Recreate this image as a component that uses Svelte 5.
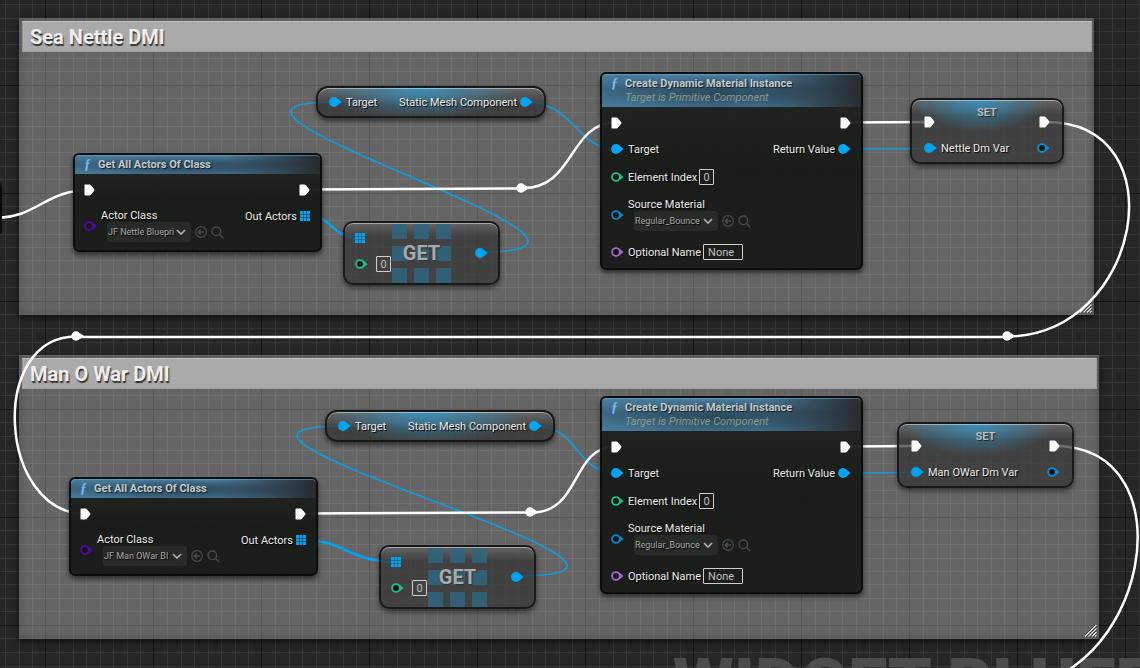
<script>
  const minorX = [14, 28, 41, 55, 68, 82, 95];
  const minorY = [13, 27, 41, 54, 67, 81, 94];

  const comments = [
    { title: 'Sea Nettle DMI', x: 19, y: 18, w: 1075, h: 297 },
    { title: 'Man O War DMI', x: 19, y: 355, w: 1080, h: 284 }
  ];

  const actorNodes = [
    { id: 'nettle', x: 73, y: 153, value: 'JF Nettle Bluepri' },
    { id: 'manowar', x: 69, y: 477, value: 'JF Man OWar Bl' }
  ];
  const componentNodes = [{ x: 316, y: 86 }, { x: 325, y: 410 }];
  const getNodes = [{ x: 343, y: 221 }, { x: 379, y: 545 }];
  const materialNodes = [{ id: 'a', x: 600, y: 72 }, { id: 'b', x: 600, y: 396 }];
  const setNodes = [
    { x: 910, y: 98, w: 154, name: 'Nettle Dm Var' },
    { x: 897, y: 422, w: 177, name: 'Man OWar Dm Var' }
  ];

  const execWires = [
    'M-6 218 C38 218 44 190 90 190',
    'M305 189.500 L521 188.500',
    'M521 188 C575 190 568 122.500 616 122.500',
    'M846 122.500 L928 122',
    'M1046 122 C1180 122 1141 336.500 1007 336.500',
    'M76 337 H1007',
    'M76 336.500 C-12 336.500 -2 514 86 514',
    'M301 513.500 L530 512.500',
    'M530 512.500 C582 514 570 446.500 616 446.500',
    'M846 446.500 L914 446',
    'M1054 446 C1193 446 1146 688 1007 688'
  ];
  const objectWires = [
    'M334 102 C138 102 687 252 481 252',
    'M525 102 C575 102 575 149 616 149',
    'M843 149 L928 148.500',
    'M344 426 C128 426 741 576 517 576',
    'M534 426 C580 426 575 473 616 473',
    'M843 473 L915 472.500'
  ];
  const arrayWires = [
    'M306 216 C335 216 330 238 360 238',
    'M302 540 C345 540 350 562 396 562'
  ];
  const reroutes = [[521, 188], [1007, 336], [76, 336], [530, 512]];
</script>

{#snippet exec()}
  <svg class="exec" width="11" height="12" viewBox="0 0 11 12" aria-hidden="true">
    <path d="M1.200 .5h4.300c.5 0 .9.200 1.200.5l3.500 4.200c.4.500.4 1.100 0 1.600L6.700 11c-.3.300-.7.500-1.200.5H1.200c-.5 0-.7-.3-.7-.7V1.200c0-.4.200-.7.700-.7z" fill="#fff" />
  </svg>
{/snippet}

{#snippet pin(color, filled)}
  <svg class="pin" width="13" height="10" viewBox="0 0 13 10" aria-hidden="true">
    <path d="M9 2 12.600 5 9 8z" fill={color} />
    {#if filled}
      <circle cx="5" cy="5" r="4.900" fill={color} />
    {:else}
      <circle cx="5" cy="5" r="3.900" fill="#141716" stroke={color} stroke-width="1.900" />
    {/if}
  </svg>
{/snippet}

{#snippet arrayPin()}
  <svg class="array" width="10" height="10" viewBox="0 0 10 10" aria-hidden="true">
    {#each [0, 3.5, 7] as y}
      {#each [0, 3.5, 7] as x}
        <rect {x} {y} width="3" height="3" fill="#00a4f2" />
      {/each}
    {/each}
  </svg>
{/snippet}

{#snippet picker(id, value)}
  <span class="picker">
    <span class="drop">
      <select {id}><option>{value}</option></select>
      <svg width="10" height="6" viewBox="0 0 10 6" aria-hidden="true">
        <path d="M1 1l4 4 4-4" fill="none" stroke="#b4b4b4" stroke-width="1.600" />
      </svg>
    </span>
    <button aria-label="Use selected asset">
      <svg width="12" height="12" viewBox="0 0 12 12" fill="none" stroke="#4a4c4a" stroke-width="1.200">
        <circle cx="6" cy="6" r="5.300" />
        <path d="M9 6H3.500M5.700 3.500 3.200 6l2.500 2.500" stroke-width="1.500" />
      </svg>
    </button>
    <button aria-label="Browse to asset">
      <svg width="13" height="13" viewBox="0 0 13 13" fill="none" stroke="#4a4c4a" stroke-width="1.300">
        <circle cx="5.300" cy="5.300" r="4.300" />
        <path d="M8.500 8.500 12.300 12.300" />
      </svg>
    </button>
  </span>
{/snippet}

<main class="graph">
  <svg class="grid" width="100%" height="100%" aria-hidden="true">
    <defs>
      <pattern id="cells" x="45" y="85" width="108" height="108" patternUnits="userSpaceOnUse">
        {#each minorX as x}<rect {x} y="0" width="1" height="108" fill="#353535" />{/each}
        {#each minorY as y}<rect x="0" {y} width="108" height="1" fill="#353535" />{/each}
        <path d="M0 0h108v1H1v107H0z" fill="#151515" />
      </pattern>
    </defs>
    <rect width="100%" height="100%" fill="url(#cells)" />
  </svg>

  <div class="watermark">WIDGET BLUEPRINT</div>

  {#each comments as c}
    <section class="comment" style="left:{c.x}px;top:{c.y}px;width:{c.w}px;height:{c.h}px">
      <h2>{c.title}</h2>
      <svg class="grip" width="12" height="12" viewBox="0 0 12 12" aria-hidden="true">
        <path d="M0 11.500 11.500 0M3.500 11.500l8-8M7 11.500l4.500-4.500M10 11.500l1.500-1.500" stroke="#222" stroke-width="2.400" />
        <path d="M0 11.500 11.500 0M3.500 11.500l8-8M7 11.500l4.500-4.500M10 11.500l1.500-1.500" stroke="#f0f0f0" stroke-width="1.300" />
      </svg>
    </section>
  {/each}

  <svg class="wires" width="100%" height="100%" aria-hidden="true">
    <g fill="none" stroke="#129bdd" stroke-width="1.700">
      {#each objectWires as d}<path {d} />{/each}
    </g>
    <g fill="none" stroke="#00a4f2" stroke-width="2.600">
      {#each arrayWires as d}<path {d} />{/each}
    </g>
    <g fill="none" stroke="#fff" stroke-width="2.500">
      {#each execWires as d}<path {d} />{/each}
    </g>
    {#each reroutes as [x, y]}
      <circle cx={x} cy={y} r="4.700" fill="#fff" />
      <path d="M{x + 4} {y - 3}l4 3-4 3z" fill="#fff" />
    {/each}
  </svg>

  <div class="stub"></div>

  {#each actorNodes as n}
    <article class="node fn actors" style="left:{n.x}px;top:{n.y}px">
      <header><i>ƒ</i><h3>Get All Actors Of Class</h3></header>
      <div class="body">
        <div class="row">{@render exec()}{@render exec()}</div>
        <div class="row top">
          <div class="field">
            {@render pin('#5106a6', false)}
            <div class="stack">
              <label for="class-{n.id}">Actor Class</label>
              {@render picker('class-' + n.id, n.value)}
            </div>
          </div>
          <div class="field out"><span>Out Actors</span>{@render arrayPin()}</div>
        </div>
      </div>
    </article>
  {/each}

  {#each componentNodes as n}
    <article class="node glass component" style="left:{n.x}px;top:{n.y}px">
      <div class="field">{@render pin('#00a4f2', true)}<span>Target</span></div>
      <div class="field out"><span>Static Mesh Component</span>{@render pin('#00a4f2', true)}</div>
    </article>
  {/each}

  {#each getNodes as n}
    <article class="node glass get" style="left:{n.x}px;top:{n.y}px">
      <div class="inputs">
        {@render arrayPin()}
        <div class="field">
          {@render pin('#1fbf8d', false)}
          <input class="num" aria-label="Index" value="0" />
        </div>
      </div>
      <div class="emblem">
        <svg width="59" height="59" viewBox="0 0 59 59" aria-hidden="true">
          {#each [0, 22, 44] as y}
            {#each [0, 22, 44] as x}
              <rect {x} {y} width="15" height="15" fill="#2c6683" fill-opacity=".8" />
            {/each}
          {/each}
        </svg>
        <h3>GET</h3>
      </div>
      {@render pin('#00a4f2', true)}
    </article>
  {/each}

  {#each materialNodes as n}
    <article class="node fn material" style="left:{n.x}px;top:{n.y}px">
      <header>
        <i>ƒ</i>
        <div><h3>Create Dynamic Material Instance</h3><p>Target is Primitive Component</p></div>
      </header>
      <div class="body">
        <div class="row">{@render exec()}{@render exec()}</div>
        <div class="row">
          <div class="field">{@render pin('#00a4f2', true)}<span>Target</span></div>
          <div class="field out"><span>Return Value</span>{@render pin('#00a4f2', true)}</div>
        </div>
        <div class="field">
          {@render pin('#1fbf8d', false)}
          <div class="entry">
            <label for="index-{n.id}">Element Index</label>
            <input class="num" id="index-{n.id}" value="0" />
          </div>
        </div>
        <div class="field">
          {@render pin('#0a86c8', false)}
          <div class="stack">
            <label for="source-{n.id}">Source Material</label>
            {@render picker('source-' + n.id, 'Regular_Bounce')}
          </div>
        </div>
        <div class="field">
          {@render pin('#a567cf', false)}
          <div class="entry">
            <label for="name-{n.id}">Optional Name</label>
            <input class="text" id="name-{n.id}" value="None" />
          </div>
        </div>
      </div>
    </article>
  {/each}

  {#each setNodes as n}
    <article class="node glass set" style="left:{n.x}px;top:{n.y}px;width:{n.w}px">
      <div class="row">{@render exec()}<h3>SET</h3>{@render exec()}</div>
      <div class="row">
        <div class="field">{@render pin('#00a4f2', true)}<span>{n.name}</span></div>
        {@render pin('#0a8fd4', false)}
      </div>
    </article>
  {/each}
</main>

<style>
  :global(body) { margin: 0; background: #262626; }
  .graph {
    position: relative;
    min-height: 100vh;
    overflow: hidden;
    background: #262626;
    color: #ececec;
    font: 11px/12px Roboto, sans-serif;
  }
  .graph * { box-sizing: border-box; }
  h2, h3, p { margin: 0; }
  svg { display: block; flex: none; }
  .grid, .wires { position: absolute; inset: 0; }

  .watermark {
    position: absolute;
    left: 673px;
    top: 642px;
    font-size: 70px;
    line-height: 84px;
    font-weight: 900;
    white-space: nowrap;
    color: #4c4c4c;
  }

  .comment {
    position: absolute;
    padding: 3px 2px 3px 3px;
    background: rgba(255, 255, 255, 0.295);
    box-shadow: inset 0 0 8px rgba(0, 0, 0, 0.25), 0 3px 6px rgba(0, 0, 0, 0.6);
  }
  .comment h2 {
    padding: 2px 7px 0;
    border: 1px solid #a0a0a0;
    border-top-color: #c2c2c2;
    background: #aaa;
    font-size: 20px;
    line-height: 27px;
    font-weight: 700;
    color: #eee;
    text-shadow: 1px 2px 1px #333;
  }
  .grip { position: absolute; right: 2px; bottom: 2px; }

  .stub {
    position: absolute;
    left: -8px;
    top: 182px;
    width: 10px;
    height: 53px;
    border: 2px solid #0b0b0b;
    border-radius: 5px;
    background: #222;
  }

  .node { position: absolute; }
  .row { display: flex; justify-content: space-between; align-items: center; }
  .row.top { align-items: flex-start; }
  .field { display: flex; align-items: center; gap: 4px; white-space: nowrap; text-shadow: 1px 1px 1px #000; }
  .field > span, .entry label { padding-top: 2px; }
  .out { gap: 3px; }
  .entry { display: flex; align-items: center; gap: 2px; }
  .stack { display: flex; flex-direction: column; }
  .stack label { padding-top: 1px; }

  .fn {
    border: 2px solid #0c0d0d;
    border-radius: 6px;
    background: linear-gradient(rgba(31, 33, 31, 0.94), rgba(24, 26, 24, 0.97) 50%, rgba(25, 28, 25, 0.97));
    box-shadow: 0 3px 5px rgba(0, 0, 0, 0.55);
  }
  .actors { width: 249px; }
  .material { width: 263px; }
  .fn header {
    display: flex;
    gap: 5px;
    padding: 3px 9px 2px;
    border-radius: 4px 4px 0 0;
    background:
      linear-gradient(to right, transparent 60%, #262c30 100%),
      radial-gradient(ellipse 45% 55% at 45% 60%, #2a485b, transparent),
      linear-gradient(#4b7e9f, #3c6580 45%, #47789a);
    box-shadow: inset 0 1px 0 rgba(110, 175, 215, 0.5);
  }
  .fn header i {
    width: 9px;
    font: italic bold 14px/14px "Liberation Serif", serif;
    color: #6fbdec;
  }
  .fn h3 { font-size: 11px; line-height: 14px; font-weight: 700; color: #c3cacd; text-shadow: 1px 1px 1px #14222b; }
  .fn p { font-size: 11px; line-height: 14px; font-style: italic; color: #8a9c86; }
  .body { display: flex; flex-direction: column; gap: 13px; padding: 10px 10px 8px 9px; }

  select, input, button { margin: 0; font-family: inherit; }
  .picker { display: flex; align-items: center; gap: 4px; margin-left: 6px; }
  .drop { display: grid; align-items: center; width: 84px; }
  .drop select {
    grid-area: 1 / 1;
    appearance: none;
    width: 100%;
    height: 20px;
    padding: 0 15px 0 1px;
    border: 0;
    border-radius: 3px;
    background: #282a28;
    color: #a9a9a9;
    font-size: 9px;
    text-shadow: 1px 1px 1px #000;
  }
  .drop svg { grid-area: 1 / 1; justify-self: end; margin-right: 5px; pointer-events: none; }
  .picker button { padding: 0; border: 0; background: none; }

  input {
    height: 16px;
    padding: 0;
    border: 1px solid #cfcfcf;
    border-radius: 1px;
    background: transparent;
    color: #c0c0c0;
    font-size: 11px;
  }
  .num { width: 15px; text-align: center; }
  .text { width: 40px; padding-left: 4px; }

  .glass {
    border: 2px solid #191919;
    background:
      linear-gradient(rgba(255, 255, 255, 0.18), transparent 22%),
      rgba(50, 50, 50, 0.7);
    box-shadow: inset 0 1px 0 rgba(230, 230, 230, 0.55), 0 3px 5px rgba(0, 0, 0, 0.5);
  }
  .component {
    display: flex;
    justify-content: space-between;
    align-items: center;
    width: 230px;
    height: 32px;
    padding: 0 11px;
    border-radius: 12px;
    background:
      radial-gradient(ellipse 45% 110% at 45% 0, rgba(50, 155, 205, 0.8), transparent),
      linear-gradient(rgba(255, 255, 255, 0.2), transparent 60%),
      rgba(50, 50, 50, 0.74);
  }
  .get {
    display: grid;
    grid-template-columns: 47px 59px 1fr;
    align-items: center;
    width: 157px;
    height: 64px;
    border-radius: 10px;
  }
  .inputs { display: flex; flex-direction: column; gap: 13px; padding: 0 0 1px 10px; }
  .inputs .field { gap: 8px; }
  .get > :global(.pin) { justify-self: end; margin-right: 10px; }
  .emblem { display: grid; place-items: center; }
  .emblem > * { grid-area: 1 / 1; }
  .emblem h3 { font-size: 20px; line-height: 24px; font-weight: 700; color: #aaa; text-shadow: 1px 1px 1px #333; }

  .set {
    display: flex;
    flex-direction: column;
    gap: 13px;
    height: 66px;
    padding: 16px 12px 0;
    border-radius: 10px;
    background:
      radial-gradient(ellipse 45% 50% at 45% 0, rgba(50, 155, 205, 0.8), transparent),
      linear-gradient(rgba(255, 255, 255, 0.18), transparent 25%),
      rgba(50, 50, 50, 0.7);
  }
  .set h3 { margin: -20px 0 -2px; font-size: 11px; line-height: 12px; font-weight: 700; color: #b9bfc2; text-shadow: 1px 1px 1px #222; }
</style>
